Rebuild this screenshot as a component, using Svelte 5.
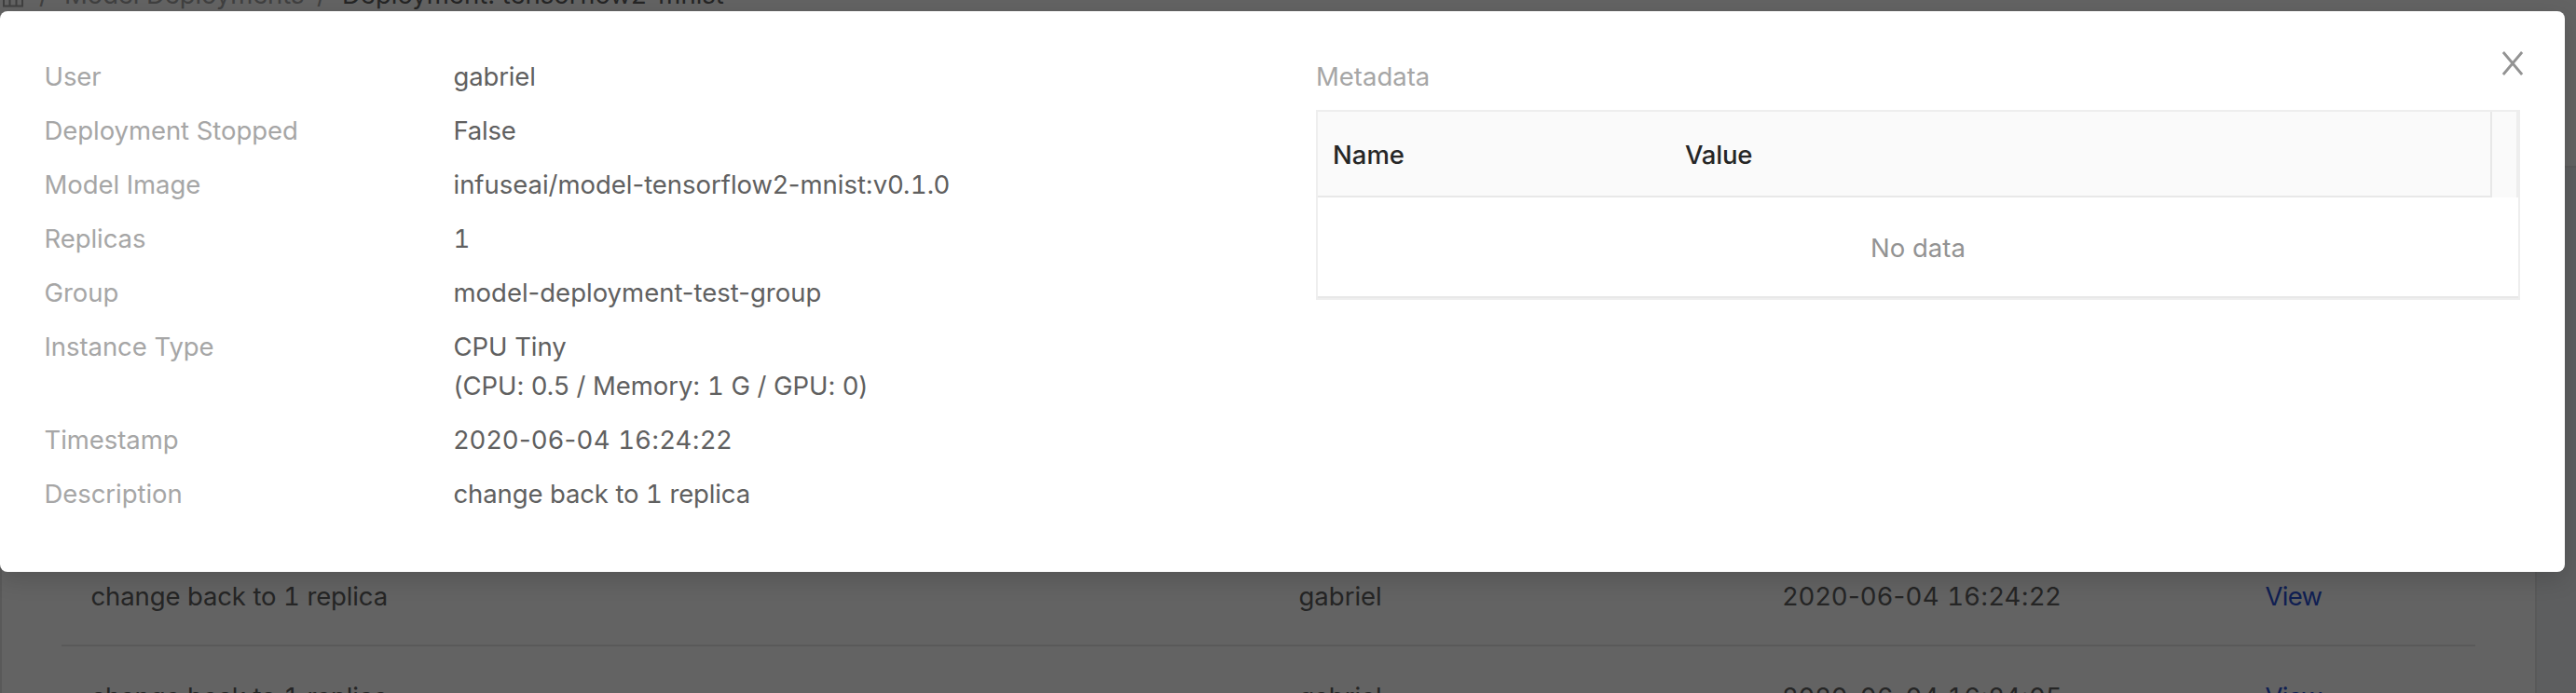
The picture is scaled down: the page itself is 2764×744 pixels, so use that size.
<script>
  const details = [
    { label: 'User', lines: ['gabriel'], spacing: -0.15 },
    { label: 'Deployment Stopped', lines: ['False'], spacing: -0.25 },
    { label: 'Model Image', lines: ['infuseai/model-tensorflow2-mnist:v0.1.0'], spacing: -0.02 },
    { label: 'Replicas', lines: ['1'] },
    { label: 'Group', lines: ['model-deployment-test-group'] },
    { label: 'Instance Type', lines: ['CPU Tiny', '(CPU: 0.5 / Memory: 1 G / GPU: 0)'], spacing: -0.05 },
    { label: 'Timestamp', lines: ['2020-06-04 16:24:22'], spacing: 0.54 },
    { label: 'Description', lines: ['change back to 1 replica'], spacing: -0.12 },
  ];
  const history = [
    { text: 'change back to 1 replica', user: 'gabriel', time: '2020-06-04 16:24:22' },
    { text: 'change back to 1 replica', user: 'gabriel', time: '2020-06-04 16:24:05' },
  ];
</script>

<!-- Gives the digit 1 the same width as the other digits, leaving punctuation proportional. -->
{#snippet digits(text)}{#each text.split(/(1)/) as part}{#if part === '1'}<span class="one">1</span>{:else}{part}{/if}{/each}{/snippet}

<div class="screen">
  <div class="page">
    <header>
      <nav>
        <svg class="home" width="24" height="24" viewBox="0 0 24 24" fill="none" stroke="#a4a4a4" stroke-width="2">
          <path d="M2 1V22.4H22V1M8.5 8V22M15.5 8V22M2 8H22" />
        </svg>
        <span class="sep">/</span>
        <span class="crumb">Model Deployments</span>
        <span class="sep">/</span>
        <span class="current">Deployment: tensorflow2-mnist</span>
      </nav>
    </header>
    <section class="card">
      {#each history as row}
        <div class="row">
          <span class="text">{@render digits(row.text)}</span>
          <span>{row.user}</span>
          <span class="time">{@render digits(row.time)}</span>
          <span class="link">View</span>
        </div>
      {/each}
    </section>
  </div>

  <div class="mask"></div>

  <div class="modal">
    <dl>
      {#each details as d}
        <div class="item">
          <dt>{d.label}</dt>
          <dd style:letter-spacing="{d.spacing ?? 0}px">
            {#each d.lines as line}<div>{@render digits(line)}</div>{/each}
          </dd>
        </div>
      {/each}
    </dl>
    <div class="meta">
      <div class="title">Metadata</div>
      <div class="table">
        <div class="thead">
          <div class="cells">
            <span>Name</span>
            <span class="value">Value</span>
          </div>
          <div class="gutter"></div>
        </div>
        <div class="empty">No data</div>
      </div>
    </div>
    <svg class="close" width="24" height="26" viewBox="0 0 24 26" stroke="#939393" stroke-width="2.8" fill="none">
      <path d="M1.9 1L22.1 25M22.1 1L1.9 25" />
    </svg>
  </div>
</div>

<style>
  :global(body) { margin: 0; overflow: hidden; }
  .screen {
    position: relative;
    width: 2764px;
    height: 744px;
    overflow: hidden;
    font: 27.5px/42px Inter, sans-serif;
    color: #606060;
  }
  .one { font-feature-settings: 'tnum'; }
  .page { height: 744px; background: #f0f2f5; overflow: hidden; }
  header {
    box-sizing: border-box;
    display: flex;
    align-items: flex-start;
    height: 180px;
    background: #fff;
    border-bottom: 2px solid #e8e8e8;
  }
  nav { display: flex; margin-top: -27px; height: 42px; white-space: nowrap; }
  .home { margin: 11px 0 0 2px; flex: none; }
  .sep { width: 10px; margin: 0 18px 0 16px; color: #a4a4a4; }
  .crumb { color: #a4a4a4; letter-spacing: -0.1px; width: 255px; margin: 0 0 0 -1px; }
  .current { margin-left: -1px; }
  .card {
    box-sizing: border-box;
    width: 2722px;
    margin-top: 24px;
    padding: 382px 64px 0;
    border: 2px solid #e4e4e4;
    border-top: 0;
    height: 600px;
    background: #fff;
  }
  .row {
    box-sizing: border-box;
    height: 108px;
    padding: 33px 0 31px 31.5px;
    display: grid;
    grid-template-columns: 1296px 519px 518px 1fr;
    border-bottom: 2px solid #e4e4e4;
  }
  .text { letter-spacing: -0.12px; }
  .time { letter-spacing: 0.54px; }
  .link { color: #2a50d4; letter-spacing: -0.7px; }
  .mask { position: absolute; inset: 0; background: rgba(0, 0, 0, 0.61); }
  .modal {
    position: absolute;
    left: 0;
    top: 12px;
    width: 2752px;
    height: 602px;
    box-sizing: border-box;
    padding: 49px 48px 0 47.5px;
    display: grid;
    grid-template-columns: 1364.5px 1292px;
    background: #fff;
    border-radius: 8px;
    box-shadow: 0 8px 24px rgba(0, 0, 0, 0.15);
  }
  dl { margin: 0; }
  .item { display: grid; grid-template-columns: 439px 1fr; padding-bottom: 16px; }
  dt { color: #a6a6a6; letter-spacing: -0.06px; }
  dd { margin: 0; }
  .title { color: #a6a6a6; }
  .table {
    box-sizing: border-box;
    height: 204px;
    margin-top: 15px;
    border: 2px solid #eee;
  }
  .thead { display: flex; height: 92px; background: #fafafa; }
  .cells {
    box-sizing: border-box;
    width: 1260px;
    padding: 25px 0 0 16px;
    display: grid;
    grid-template-columns: 378px 1fr;
    border-right: 2px solid #e8e8e8;
    border-bottom: 2px solid #e8e8e8;
    font-weight: 500;
    color: #262626;
  }
  .value { letter-spacing: -0.2px; }
  .gutter { flex: 1; border-right: 2px solid #eee; }
  .empty {
    box-sizing: border-box;
    height: 108px;
    padding-top: 33px;
    text-align: center;
    color: #939393;
    border-bottom: 2px solid #e8e8e8;
  }
  .close { position: absolute; left: 2684px; top: 43px; }
</style>
